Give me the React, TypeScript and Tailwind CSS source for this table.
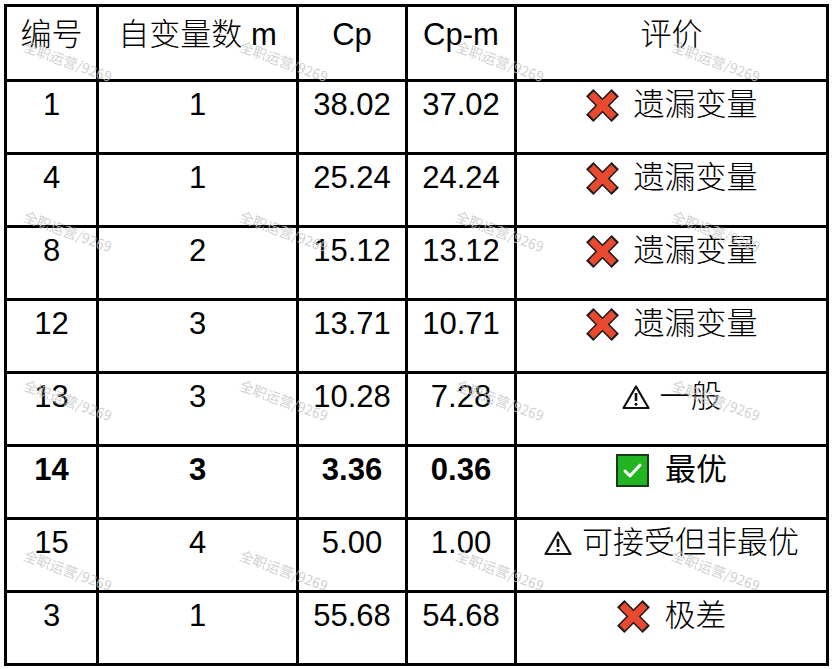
import React from "react";

type Kind = "x" | "warn" | "ok";
type Row = { id: string; m: string; cp: string; cpm: string; kind: Kind; text: string; bold?: boolean };

const rows: Row[] = [
  { id: "1", m: "1", cp: "38.02", cpm: "37.02", kind: "x", text: "遗漏变量" },
  { id: "4", m: "1", cp: "25.24", cpm: "24.24", kind: "x", text: "遗漏变量" },
  { id: "8", m: "2", cp: "15.12", cpm: "13.12", kind: "x", text: "遗漏变量" },
  { id: "12", m: "3", cp: "13.71", cpm: "10.71", kind: "x", text: "遗漏变量" },
  { id: "13", m: "3", cp: "10.28", cpm: "7.28", kind: "warn", text: "一般" },
  { id: "14", m: "3", cp: "3.36", cpm: "0.36", kind: "ok", text: "最优", bold: true },
  { id: "15", m: "4", cp: "5.00", cpm: "1.00", kind: "warn", text: "可接受但非最优" },
  { id: "3", m: "1", cp: "55.68", cpm: "54.68", kind: "x", text: "极差" },
];

function XIcon() {
  return (
    <svg width="33" height="33" viewBox="0 0 32 32" className="shrink-0">
      <line x1="3.6" y1="3.6" x2="28.4" y2="28.4" stroke="#1a1a1a" strokeWidth="10" />
      <line x1="28.4" y1="3.6" x2="3.6" y2="28.4" stroke="#1a1a1a" strokeWidth="10" />
      <line x1="5" y1="5" x2="27" y2="27" stroke="#e8492f" strokeWidth="7" />
      <line x1="27" y1="5" x2="5" y2="27" stroke="#e8492f" strokeWidth="7" />
    </svg>
  );
}

function WarnIcon() {
  return (
    <svg width="28" height="26" viewBox="0 0 28 26" className="shrink-0">
      <path d="M14 2.5 L26.5 24 H1.5 Z" fill="none" stroke="#111" strokeWidth="2.2" strokeLinejoin="round" />
      <line x1="14" y1="9" x2="14" y2="17" stroke="#111" strokeWidth="2.6" />
      <circle cx="14" cy="20.3" r="1.5" fill="#111" />
    </svg>
  );
}

function OkIcon() {
  return (
    <svg width="33" height="33" viewBox="0 0 33 33" className="shrink-0">
      <rect x="1" y="1" width="31" height="31" fill="#21b521" stroke="#1b3a1b" strokeWidth="2" />
      <polyline points="9,17 14,22 24,11" fill="none" stroke="#fff" strokeWidth="3" strokeLinecap="round" strokeLinejoin="round" />
    </svg>
  );
}

const cell = "bg-white h-full pt-[6px] text-center leading-[34px]";

const marks: { x: number; y: number }[] = [];
[61, 231, 400, 570].forEach((y) => [68, 284, 500, 716].forEach((x) => marks.push({ x, y })));

export default function App() {
  return (
    <div className="relative w-[833px] h-[669px] bg-white text-black font-['Liberation_Sans','Noto_Sans_CJK_SC',sans-serif] text-[31px]">
      <div className="absolute left-[4px] top-[4px] grid grid-cols-[89px_197px_106px_106px_309px] grid-rows-[72px_repeat(8,70px)] gap-[3px] p-[3px] bg-black">
        <div className={`${cell} pt-[11px] font-light`}>编号</div>
        <div className={`${cell} pt-[11px] font-light`}>自变量数 m</div>
        <div className={`${cell} pt-[11px]`}>Cp</div>
        <div className={`${cell} pt-[11px]`}>Cp-m</div>
        <div className={`${cell} pt-[11px] font-light`}>评价</div>
        {rows.map((r) => (
          <React.Fragment key={r.id + r.cp}>
            <div className={`${cell} ${r.bold ? "font-bold" : ""}`}>{r.id}</div>
            <div className={`${cell} ${r.bold ? "font-bold" : ""}`}>{r.m}</div>
            <div className={`${cell} ${r.bold ? "font-bold" : ""}`}>{r.cp}</div>
            <div className={`${cell} ${r.bold ? "font-bold" : ""}`}>{r.cpm}</div>
            <div className="bg-white h-full pt-[6px] flex items-start justify-center">
              <div className="flex items-center h-[34px]">
                {r.kind === "x" && <XIcon />}
                {r.kind === "warn" && <WarnIcon />}
                {r.kind === "ok" && <OkIcon />}
                <span
                  className={`leading-[34px] ${r.kind === "x" ? "ml-[15px]" : r.kind === "ok" ? "ml-[16px]" : "ml-[10px]"} ${r.bold ? "font-normal" : "font-light"}`}
                >
                  {r.text}
                </span>
              </div>
            </div>
          </React.Fragment>
        ))}
      </div>
      {marks.map((m, i) => (
        <div
          key={i}
          className="absolute pointer-events-none -translate-x-1/2 -translate-y-1/2 rotate-[20deg] whitespace-nowrap text-[14px] leading-none text-[#c4c4c4]/80 font-['Noto_Sans_CJK_SC',sans-serif]"
          style={{ left: m.x, top: m.y }}
        >
          全职运营/9269
        </div>
      ))}
    </div>
  );
}
